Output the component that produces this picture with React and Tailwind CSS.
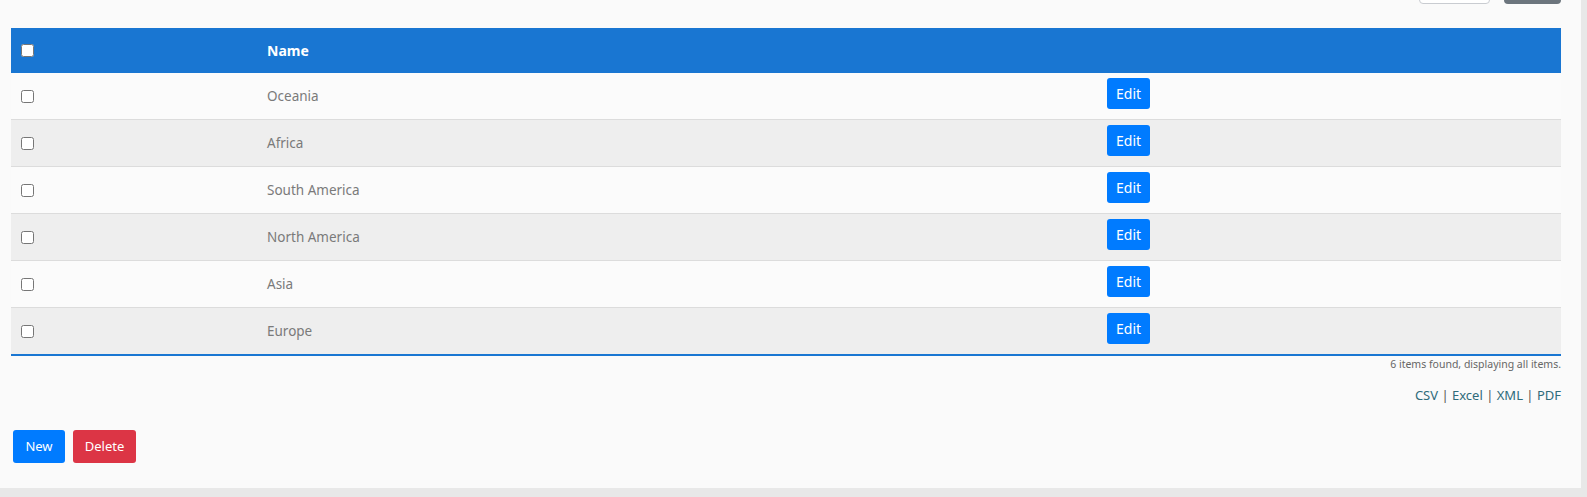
const regions = ["Oceania", "Africa", "South America", "North America", "Asia", "Europe"];

const App = () => {
  return (
    <div
      className="w-[1587px] h-[497px] bg-[#e8e8e8] flex overflow-hidden"
      style={{ fontFamily: '"Noto Sans", "Open Sans", sans-serif' }}
    >
      <div className="w-[1581px] h-[488px] bg-[#fafafa] flex flex-col">
        {/* top actions, scrolled mostly out of view */}
        <div className="h-[4px] flex justify-end items-end gap-[14px] pr-[20px] overflow-hidden shrink-0">
          <div className="w-[71px] h-[34px] shrink-0 bg-white border border-[#c9ccd1] rounded-[4px]" />
          <div className="w-[57px] h-[34px] shrink-0 bg-[#6c757d] rounded-[4px]" />
        </div>

        <div className="ml-[11px] mt-[24px] w-[1550px]">
          {/* header */}
          <div className="h-[45px] bg-[#1976d2] flex items-center text-white text-[14px] font-bold">
            <div className="w-[246px] pl-[10px] flex items-center">
              <input type="checkbox" className="w-[13px] h-[13px] m-0" />
            </div>
            <div className="pl-[10px]">Name</div>
          </div>

          {/* rows */}
          {regions.map((name, i) => (
            <div
              key={name}
              className={`flex text-[13.5px] text-[#7a7a7a] ${i % 2 === 1 ? "bg-[#eeeeee]" : "bg-[#fbfbfb]"} ${i === 0 ? "h-[46px]" : "h-[47px] border-t border-[#dcdcdc]"}`}
            >
              <div className="w-[246px] pl-[10px] flex items-center">
                <input type="checkbox" className="w-[13px] h-[13px] m-0" />
              </div>
              <div className="w-[840px] pl-[10px] flex items-center">{name}</div>
              <div className="pl-[10px] pt-[5px]">
                <button className="h-[31px] px-[9px] bg-[#007bff] text-white text-[14px] rounded-[3px]">
                  Edit
                </button>
              </div>
            </div>
          ))}
          <div className="h-[2px] bg-[#1976d2]" />

          <div className="text-right text-[10.5px] text-[#666] leading-[16px]">
            6 items found, displaying all items.
          </div>
          <div className="mt-[13px] text-right text-[13px] leading-[20px] text-[#555]">
            <span className="text-[#2f6b7a]">CSV</span> |{" "}
            <span className="text-[#2f6b7a]">Excel</span> |{" "}
            <span className="text-[#2f6b7a]">XML</span> |{" "}
            <span className="text-[#2f6b7a]">PDF</span>
          </div>
        </div>

        <div className="ml-[13px] mt-[25px] flex gap-[8px]">
          <button className="w-[52px] h-[33px] bg-[#007bff] text-white text-[13px] rounded-[3px]">
            New
          </button>
          <button className="w-[63px] h-[33px] bg-[#dc3545] text-white text-[13px] rounded-[3px]">
            Delete
          </button>
        </div>
      </div>
    </div>
  );
};

export default App;
